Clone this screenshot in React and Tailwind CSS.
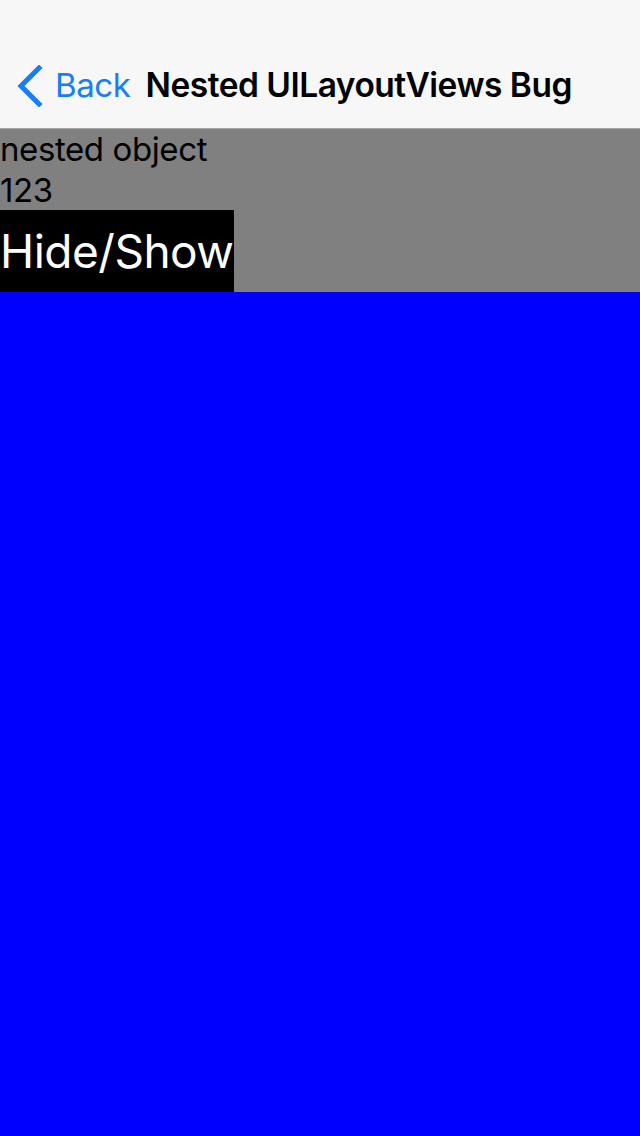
import React from 'react';

const font = { fontFamily: 'Inter, "Noto Sans", sans-serif' };

export default function App() {
  return (
    <div className="w-[640px] h-[1136px] flex flex-col bg-[#0000ff]" style={font}>
      {/* navigation bar */}
      <div className="h-[129px] shrink-0 bg-[#f7f7f7] border-b border-[#a6a6a6] flex items-end">
        <div className="h-[88px] w-full flex items-center pt-[3px]">
          <button className="flex items-center text-[#147efb] pl-[16px]">
            <svg width="28" height="42" viewBox="0 0 28 42" fill="none">
              <path d="M23 3 L5 21 L23 39" stroke="#147efb" strokeWidth="5" strokeLinecap="square" strokeLinejoin="miter" />
            </svg>
            <span className="text-[33px] leading-none ml-[11px] tracking-[-0.4px]">Back</span>
          </button>
          <h1 className="text-[33.5px] leading-none font-semibold text-black ml-[15px] tracking-[-0.5px]">
            Nested UILayoutViews Bug
          </h1>
        </div>
      </div>

      {/* gray stack */}
      <div className="bg-[#808080] flex flex-col items-start">
        <div className="text-[33px] leading-[41px] text-black tracking-[-0.4px]">nested object</div>
        <div className="text-[33px] leading-[40px] text-black tracking-[-0.4px]">123</div>
        <button className="bg-black text-white text-[46px] h-[82px] w-[234px] flex items-center tracking-[-0.5px]">
          Hide/Show
        </button>
      </div>

      <div className="flex-1 bg-[#0000ff]" />
    </div>
  );
}
